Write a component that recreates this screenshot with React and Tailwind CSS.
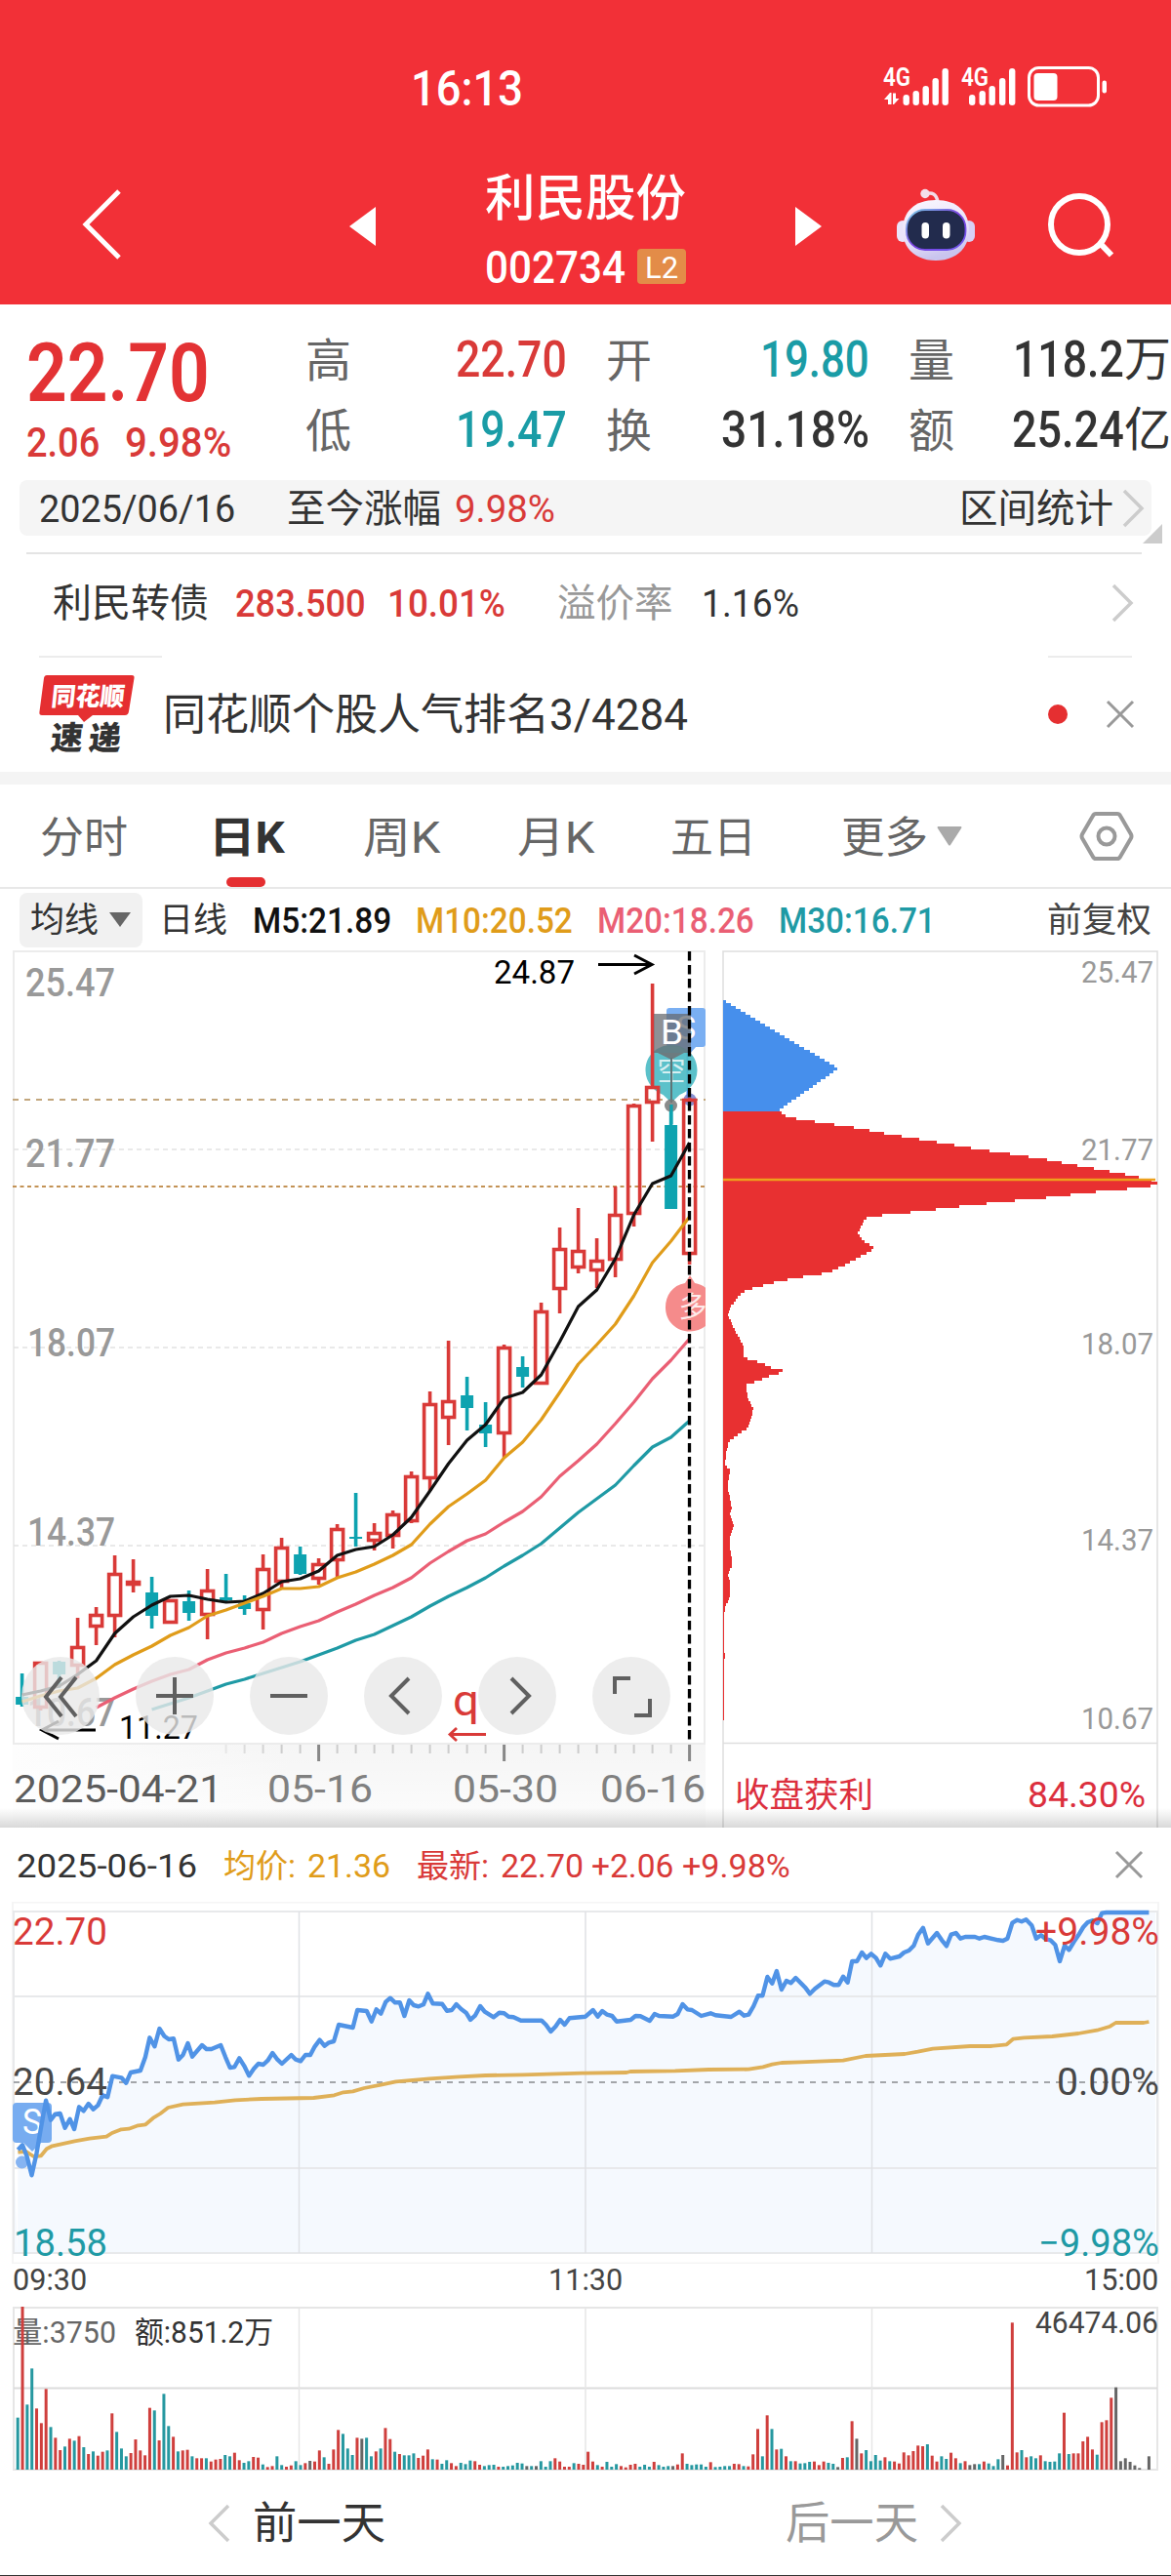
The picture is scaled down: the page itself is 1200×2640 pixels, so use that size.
import { useLayoutEffect, useRef } from "react";

const RED = "#d93a38";
const TEAL = "#0ea3b0";

// open/close body edges and wick ends, in chart pixels
const candles = [
  ["t", 1715, 1739, 1747, 1749], ["r", 1703, 1703, 1750, 1753], ["t", 1702, 1703, 1716, 1730],
  ["r", 1658, 1687, 1707, 1720], ["r", 1647, 1654, 1667, 1686], ["r", 1594, 1612, 1656, 1678],
  ["r", 1598, 1620, 1624, 1632], ["t", 1616, 1632, 1656, 1669], ["r", 1639, 1639, 1663, 1663],
  ["t", 1630, 1641, 1653, 1661], ["r", 1608, 1629, 1655, 1680], ["t", 1613, 1637, 1640, 1641],
  ["t", 1635, 1643, 1649, 1655], ["r", 1593, 1607, 1650, 1670], ["r", 1576, 1585, 1621, 1628],
  ["t", 1585, 1593, 1613, 1614], ["r", 1597, 1602, 1618, 1624], ["r", 1562, 1566, 1599, 1617],
  ["t", 1530, 1575, 1577, 1585], ["r", 1561, 1570, 1579, 1589], ["r", 1548, 1551, 1574, 1587],
  ["r", 1508, 1512, 1559, 1561], ["r", 1426, 1438, 1515, 1528], ["r", 1374, 1435, 1453, 1481],
  ["t", 1411, 1430, 1443, 1466], ["t", 1437, 1460, 1469, 1483], ["r", 1378, 1380, 1469, 1494],
  ["t", 1390, 1401, 1411, 1422], ["r", 1335, 1343, 1418, 1419], ["r", 1258, 1279, 1321, 1346],
  ["r", 1238, 1281, 1299, 1305], ["r", 1269, 1291, 1302, 1320], ["r", 1216, 1244, 1291, 1309],
  ["r", 1131, 1132, 1244, 1257], ["r", 1008, 1113, 1130, 1170], ["t", 1132, 1153, 1239, 1239],
  ["r", 1125, 1126, 1285, 1296],
];

const averages = [
  { color: "#111", from: 0, ys: [1737, 1733, 1728, 1716, 1702, 1674, 1657, 1645, 1636, 1635, 1639, 1642, 1641, 1633, 1621, 1618, 1610, 1594, 1588, 1585, 1573, 1555, 1528, 1500, 1476, 1460, 1433, 1427, 1409, 1375, 1339, 1322, 1290, 1245, 1213, 1205, 1171] },
  { color: "#e09c1a", from: 0, ys: [1744, 1738, 1733, 1730, 1720, 1706, 1696, 1687, 1676, 1668, 1656, 1650, 1643, 1636, 1628, 1628, 1626, 1617, 1611, 1603, 1594, 1583, 1562, 1544, 1531, 1517, 1494, 1478, 1455, 1427, 1398, 1378, 1357, 1328, 1294, 1272, 1247] },
  { color: "#ea5f74", from: 4, ys: [1750, 1740, 1731, 1723, 1716, 1711, 1701, 1694, 1689, 1683, 1674, 1667, 1661, 1652, 1644, 1635, 1627, 1617, 1602, 1590, 1579, 1572, 1560, 1549, 1534, 1513, 1497, 1480, 1459, 1437, 1413, 1394, 1372] },
  { color: "#1f9aa5", from: 7, ys: [1752, 1746, 1740, 1733, 1726, 1721, 1715, 1709, 1703, 1696, 1689, 1681, 1675, 1666, 1657, 1646, 1636, 1627, 1617, 1605, 1594, 1582, 1566, 1550, 1536, 1522, 1502, 1483, 1473, 1456] },
];

const candleX = (i) => 22.6 + i * 19;

// chip distribution contour: x,y pairs
const chips = [
  [741, 1025], [859, 1095], [798, 1138], [807, 1145], [832, 1149], [878, 1156], [908, 1162], [939, 1167], [969, 1172],
  [1003, 1178], [1032, 1182], [1070, 1188], [1101, 1194], [1129, 1199], [1156, 1204], [1174, 1208], [1186, 1211],
  [1186, 1214.5], [1160, 1218], [1134, 1220.5], [1107, 1223], [1083, 1226.5], [1035, 1231], [987, 1236], [963, 1239],
  [916, 1244.5], [891, 1246.5], [886, 1250], [879, 1264], [885, 1272], [895, 1278], [895, 1280], [885, 1286], [864, 1297.5],
  [848, 1304.5], [814, 1310], [791, 1315], [764, 1322.5], [757, 1328.5], [748, 1340], [746, 1347], [751, 1359],
  [761.5, 1379], [761.5, 1391], [781, 1397], [791, 1402], [802, 1404.5], [802, 1406.5], [790, 1409.5], [781, 1413.5],
  [764.5, 1419.5], [766, 1432], [772, 1444], [767, 1463], [760, 1467.5], [747, 1477.5], [744, 1488], [743, 1501],
  [748.5, 1507], [745.5, 1522], [749.6, 1545.5], [748, 1553], [752, 1564.5], [747.7, 1576], [748.5, 1588],
  [750.4, 1604], [746, 1614], [748.5, 1624], [748, 1635], [743, 1648], [741.2, 1661], [741.6, 1688], [742.7, 1695],
  [741.6, 1717], [742.2, 1729], [741.2, 1764],
];

function chipEdge(y) {
  for (let i = 1; i < chips.length; i++) {
    const [x0, y0] = chips[i - 1];
    const [x1, y1] = chips[i];
    if (y <= y1) return x0 + ((x1 - x0) * (y - y0)) / (y1 - y0);
  }
  return 741;
}

const pairs = (s) => s.trim().split(/\s+/).map((p) => p.split(",").map(Number));
const toPage = (list, ox) => list.map(([x, y]) => [ox + x / 2.6133, 1860 + y / 3]);

const price = [
  ...toPage(pairs("48,1030 60,1015 72,1050 85,1108 98,1040 110,960 123,878 136,938 148,920 161,918 174,962 187,935 199,966 212,898 224,910 237,888 250,905 262,893 275,862 288,868 301,803 325,808 338,824 350,792 376,786 389,745 401,685 414,712 427,657 440,680 452,690 465,688 478,752 490,738 503,702 515,743 541,708 553,720 566,720 591,708 604,745 616,777 628,775 641,748 654,772 667,802 680,780 692,765 705,768 717,755 730,732 743,752 755,765 780,738 792,752 805,757 818,738 831,738 843,712 856,692 869,710 881,700 894,696 907,645 945,654 957,600 982,603 995,635 1008,598 1020,611 1033,575 1045,563 1058,577 1071,577 1083,618 1096,570 1108,585 1121,589 1134,583 1146,550 1159,580 1184,581 1197,602 1210,600 1222,582 1235,597 1248,608 1260,630 1273,616 1286,588 1298,605 1322,622 1337,608 1350,610 1362,620 1375,622 1395,632 1450,632 1462,645 1475,666 1488,650 1500,630 1512,645 1525,625"), 0),
  ...toPage(pairs("0,620 20,600 33,620 45,603 58,614 71,618 83,635 121,630 134,618 147,619 172,633 185,612 197,618 235,620 247,612 260,582 273,598 285,600 310,618 335,610 348,616 390,621 412,605 425,617 437,614 450,588 462,556 474,556 487,498 500,518 512,480 525,537 538,510 550,517 563,501 588,530 601,550 614,535 640,512 652,515 665,523 678,523 690,497 702,515 714,450 727,450 740,423 752,440 765,427 778,440 790,463 803,427 816,442 841,435 853,423 866,417 879,402 891,368 904,347 917,395 941,363 954,385 967,403 979,368 992,363 1004,380 1017,375 1043,375 1055,380 1068,375 1105,385 1118,387 1130,380 1143,332 1156,323 1168,328 1180,322 1195,340 1207,380 1220,370 1233,382 1245,385 1258,400 1270,450 1283,402 1295,415 1308,390 1320,370 1333,345 1345,330 1358,325 1371,333 1383,302 1395,300 1509,300"), 600),
];

const avgPrice = [
  ...toPage(pairs("48,1037 70,1035 90,1050 110,1048 125,1027 140,1018 200,1003 240,995 285,989 300,978 325,967 345,965 370,955 390,952 410,932 430,918 450,900 490,890 575,884 630,877 700,873 840,870 895,862 920,853 945,850 975,840 1020,830 1060,820 1150,811 1230,805 1300,801 1400,799 1560,794"), 0),
  ...toPage(pairs("0,794 110,792 120,789 240,787 330,783 437,782 475,775 500,767 525,762 575,760 690,755 750,741 855,735 890,728 930,719 1030,711 1085,711 1128,706 1145,689 1175,685 1250,681 1320,672 1370,662 1405,650 1420,639 1495,639 1509,636"), 600),
];

// r = up, t = down, k = flat; the number is the top of the bar
const volume =
  "t533 r192 t493 t382 r505 r550 r445 t562 r595 r633 t622 r598 t604 r590 t624 r645 t637 r650 r638 t634 r520 t577 t628 t652 r642 r600 r634 r649 r503 t511 r603 t460 t559 r592 t637 r634 r632 t652 r658 r658 t658 r668 r662 r660 t648 t652 r641 r664 t672 t667 r654 r656 t677 r685 r682 t652 t679 r684 r680 t667 t679 r673 k666 r668 r634 t655 r675 r631 r571 t583 t628 t648 r595 k598 t595 t652 r637 t628 r565 r599 t638 r645 t649 t649 t643 r657 r650 r631 t661 r662 t675 t664 r673 r682 t672 t676 t665 r667 r678 t682 t679 t678 r684 t684 t682 t680 t672 t674 k682 t682 k682 t667 t684 t667 r658 r668 r684 r684 t673 r675 r678 r638 r668 t679 r684 t669 t684 t676 r682 r686 r678 r675 t684 t678 t684 r669 t679 t684 t682 k682 r677 r643 t675 t679 t677 t677 t684 r670 t685 t684 t682 t682 r675 r676 t682 r683 r646 r568 t652 r526 t568 r631 t629 r652 t667 r667 t674 t673 t669 r668 r679 r668 t672 t675 k685 r657 t655 r544 k598 r643 t633 t667 t648 t665 r655 t667 r668 r674 r640 r649 r636 r619 r621 t615 r650 r668 t652 t660 r641 r658 t673 r667 k679 k676 t676 r668 t674 t682 t661 k648 r680 r241 r640 t633 r655 t652 t658 r649 t667 t669 t668 t643 r518 t645 r643 r643 r606 r592 r631 t647 r547 r541 r472 k440 k667 k658 k669 k680 k688 k693 k652".split(" ");

const volColor = { r: "#cf3f3d", t: "#2698a0", k: "#666" };

const points = (list) => list.map(([x, y]) => `${x.toFixed(1)},${y.toFixed(1)}`).join(" ");

// Text squeezed or stretched to the width of its box
function Fit({ className, children }) {
  const outer = useRef(null);
  const inner = useRef(null);
  useLayoutEffect(() => {
    const ratio = outer.current.clientWidth / inner.current.offsetWidth;
    inner.current.style.transform = `translateY(1px) scaleX(${ratio})`;
  }, [children]);
  return (
    <span ref={outer} className={`block shrink-0 leading-none whitespace-nowrap ${className}`}>
      <span ref={inner} className="inline-block origin-left align-top">
        {children}
      </span>
    </span>
  );
}

function Label({ x, y, w, size = 40, fill = "#999", weight = 400, children }) {
  return (
    <text x={x} y={y} fontSize={size} fill={fill} fontWeight={weight} textLength={w} lengthAdjust="spacingAndGlyphs">
      {children}
    </text>
  );
}

function Chevron({ left, className }) {
  return (
    <svg viewBox="0 0 24 40" className={`w-6 h-10 shrink-0 ${className}`} fill="none" stroke="currentColor" strokeWidth="3.5">
      <path d={left ? "M21 2 3 20l18 18" : "M3 2l18 18L3 38"} />
    </svg>
  );
}

function Close({ className }) {
  return (
    <svg viewBox="0 0 30 30" className={`w-[30px] h-[30px] shrink-0 ${className}`} stroke="#999" strokeWidth="3">
      <path d="M2 2l26 26M28 2 2 28" />
    </svg>
  );
}

function Signal() {
  const bars = [
    [23.5, 11], [33.5, 15], [43.5, 20], [53.5, 28], [63.5, 38],
    [91, 11], [101.5, 15], [111.5, 20], [122, 28], [132, 38],
  ];
  return (
    <svg viewBox="0 0 150 50" className="w-[150px] h-[50px] ml-[366px] shrink-0" fill="#fff">
      <Label x={3} y={23} w={28} size={26} fill="#fff" weight={600}>4G</Label>
      <Label x={83} y={23} w={28} size={26} fill="#fff" weight={600}>4G</Label>
      <path d="M4 37l6-7h1.500V42H8v-5zM13 30.500h3V36h3.500l-5.500 6h-1z" />
      {bars.map(([x, h]) => (
        <rect key={x} x={x} y={43 - h} width="6.400" height={h} rx="3.200" />
      ))}
    </svg>
  );
}

function Battery() {
  return (
    <svg viewBox="0 0 84 42" className="w-[84px] h-[42px] ml-[1px] -mt-[3px] shrink-0">
      <rect x="1.500" y="1.500" width="71" height="38.500" rx="10" fill="none" stroke="#fff" strokeWidth="3" />
      <rect x="6.500" y="7" width="24" height="28" rx="4" fill="#fff" />
      <rect x="76.500" y="14.500" width="4.500" height="13" rx="2.200" fill="#fff" />
    </svg>
  );
}

function Robot() {
  return (
    <svg viewBox="0 0 80 76" className="w-20 h-[76px] ml-[77px] shrink-0">
      <defs>
        <linearGradient id="shell" x1="0" y1="0" x2="0.300" y2="1">
          <stop offset="0" stopColor="#fbf8ff" />
          <stop offset="0.700" stopColor="#e6def8" />
          <stop offset="1" stopColor="#c9c4ee" />
        </linearGradient>
        <linearGradient id="rim" x1="0" y1="0" x2="1" y2="1">
          <stop offset="0" stopColor="#7fd8ea" />
          <stop offset="0.500" stopColor="#7a3fe0" />
          <stop offset="1" stopColor="#6f5cf0" />
        </linearGradient>
      </defs>
      <path d="M29 7q11-4 13 8" fill="none" stroke="#f3dbe8" strokeWidth="3.500" />
      <circle cx="29" cy="6.500" r="4.700" fill="#f4dfea" />
      <rect x="0" y="34" width="12" height="22" rx="6" fill="#eae4fa" />
      <rect x="68" y="34" width="12" height="22" rx="6" fill="#d8d0f5" />
      <path d="M40 13c22 0 34 12 34 31S60 75 40 75 6 63 6 44s12-31 34-31z" fill="url(#shell)" />
      <rect x="10" y="23" width="60.500" height="41" rx="19" fill="#222b4d" stroke="url(#rim)" strokeWidth="1.800" />
      <rect x="25.500" y="36" width="7.500" height="16.500" rx="3.700" fill="#fff" />
      <rect x="47" y="36" width="7.500" height="16.500" rx="3.700" fill="#fff" />
    </svg>
  );
}

function Header() {
  return (
    <header className="h-[312px] bg-[#f23037] text-white">
      <div className="flex h-[140px] items-center pt-[40px]">
        <Fit className="w-[115px] ml-[421px] text-[50px] font-medium">16:13</Fit>
        <Signal />
        <Battery />
      </div>
      <div className="flex h-[172px] items-center pt-[8px]">
        <svg viewBox="0 0 42 72" className="w-[42px] h-[72px] ml-[83px] shrink-0" fill="none" stroke="#fff" strokeWidth="5">
          <path d="M39 2 5 36l34 34" />
        </svg>
        <svg viewBox="0 0 27 40" className="w-[27px] h-10 ml-[233px] mt-1 shrink-0">
          <path d="M27 0v40L0 20z" fill="#fff" />
        </svg>
        <div className="ml-[112px] w-[206px] shrink-0 pt-[8px]">
          <Fit className="w-[206px] text-[51px] font-medium">利民股份</Fit>
          <div className="mt-[27px] flex h-9 items-center">
            <Fit className="w-[144px] text-[46px] font-medium">002734</Fit>
            <div className="ml-[12px] flex h-9 w-[51px] items-center justify-center rounded bg-[#e38c48]">
              <Fit className="w-[34px] text-[31px]">L2</Fit>
            </div>
          </div>
        </div>
        <svg viewBox="0 0 27 40" className="w-[27px] h-10 ml-[112px] mt-1 shrink-0">
          <path d="M0 0v40l27-20z" fill="#fff" />
        </svg>
        <Robot />
        <svg viewBox="0 0 68 68" className="w-[68px] h-[68px] ml-[75px] mt-1 shrink-0" fill="none" stroke="#fff" strokeWidth="6">
          <circle cx="32" cy="32" r="29" />
          <path d="M53 51l12 12.500" />
        </svg>
      </div>
    </header>
  );
}

function Quote() {
  return (
    <section className="flex h-[180px] text-[#333]">
      <div className="w-[313px] shrink-0 pl-[27px] pt-[28px] text-[#e33234]">
        <Fit className="w-[188px] text-[84px] font-semibold">22.70</Fit>
        <div className="mt-[8px] flex text-[#d93a38] text-[42px] font-medium">
          <Fit className="w-[75px]">2.06</Fit>
          <Fit className="w-[109px] ml-[26px]">9.98%</Fit>
        </div>
      </div>
      <div className="flex shrink-0 flex-col gap-[20px] pt-[30px] text-[52px] font-medium">
        <div className="flex h-[52px] items-center">
          <Fit className="w-[47px] text-[47px] font-normal text-[#666]">高</Fit>
          <Fit className="w-[114px] ml-[107px] text-[#d93a38]">22.70</Fit>
          <Fit className="w-[47px] ml-[40px] text-[47px] font-normal text-[#666]">开</Fit>
          <Fit className="w-[112px] ml-[111px] text-[#1a9ca6]">19.80</Fit>
          <Fit className="w-[47px] ml-[40px] text-[47px] font-normal text-[#666]">量</Fit>
          <div className="ml-[60px] flex items-center">
            <Fit className="w-[114px]">118.2</Fit>
            <Fit className="w-[48px] text-[48px] font-normal">万</Fit>
          </div>
        </div>
        <div className="flex h-[52px] items-center">
          <Fit className="w-[47px] text-[47px] font-normal text-[#666]">低</Fit>
          <Fit className="w-[114px] ml-[107px] text-[#1a9ca6]">19.47</Fit>
          <Fit className="w-[47px] ml-[40px] text-[47px] font-normal text-[#666]">换</Fit>
          <Fit className="w-[152px] ml-[71px]">31.18%</Fit>
          <Fit className="w-[47px] ml-[40px] text-[47px] font-normal text-[#666]">额</Fit>
          <div className="ml-[59px] flex items-center">
            <Fit className="w-[115px]">25.24</Fit>
            <Fit className="w-[48px] text-[48px] font-normal">亿</Fit>
          </div>
        </div>
      </div>
    </section>
  );
}

function Interval() {
  return (
    <div className="relative h-[74px] px-5">
      <div className="flex h-[57px] items-center rounded-lg bg-[#f5f5f5] text-[39.500px] text-[#333]">
        <Fit className="w-[201px] ml-[20px]">2025/06/16</Fit>
        <Fit className="w-[158px] ml-[53px]">至今涨幅</Fit>
        <Fit className="w-[103px] ml-[14px] text-[#d93a38]">9.98%</Fit>
        <Fit className="w-[158px] ml-[414px]">区间统计</Fit>
        <Chevron className="ml-[8px] text-[#ccc]" />
      </div>
      <svg viewBox="0 0 20 20" className="absolute left-[1171px] top-[45px] w-5 h-5">
        <path d="M20 0v20H0z" fill="#ccc" />
      </svg>
      <div className="ml-[7px] mt-[17px] h-0.5 w-[1143px] bg-[#e4e4e4]" />
    </div>
  );
}

function Bond() {
  return (
    <div className="flex h-[106px] items-center pb-[3px] text-[39.500px] text-[#333]">
      <Fit className="w-[160px] ml-[54px]">利民转债</Fit>
      <Fit className="w-[134px] ml-[27px] font-medium text-[#d93a38]">283.500</Fit>
      <Fit className="w-[121px] ml-[22px] font-medium text-[#d93a38]">10.01%</Fit>
      <Fit className="w-[119px] ml-[53px] text-[#999]">溢价率</Fit>
      <Fit className="w-[100px] ml-[29px]">1.16%</Fit>
      <Chevron className="ml-[319px] text-[#ccc]" />
    </div>
  );
}

function News() {
  return (
    <div className="h-[119px]">
      <div className="flex justify-between pl-10 pr-10">
        <div className="h-0.5 w-[126px] bg-[#ececec]" />
        <div className="h-0.5 w-[86px] bg-[#ececec]" />
      </div>
      <div className="flex h-[117px] items-center pb-[1px]">
        <svg viewBox="0 0 98 80" className="w-[98px] h-20 ml-[40px] shrink-0 overflow-visible">
          <path d="M8 0h87q3 0 2.500 3L92 37q-.500 4-4 4H55l-9 7-6-7H3q-3 0-2.600-3L5 3q.500-3 3-3z" fill="#e52f31" />
          <g transform="skewX(-6)">
            <Label x={15} y={31} w={75} size={26} fill="#fff" weight={900}>同花顺</Label>
            <Label x={19} y={76} w={33} size={33} fill="#333" weight={900}>速</Label>
            <Label x={58} y={76} w={33} size={33} fill="#333" weight={900}>递</Label>
          </g>
        </svg>
        <Fit className="w-[538px] ml-[29px] text-[44.500px] text-[#333]">同花顺个股人气排名3/4284</Fit>
        <div className="ml-[369px] h-5 w-5 rounded-full bg-[#e52f31]" />
        <Close className="ml-[39px]" />
      </div>
    </div>
  );
}

function Tabs() {
  return (
    <nav className="flex h-[107px] items-start border-b-2 border-[#e8e8e8] pt-[32px] text-[44.500px] text-[#666]">
      <Fit className="w-[90px] ml-[41px]">分时</Fit>
      <div className="relative ml-[83px] h-[73px]">
        <Fit className="w-[78px] font-bold text-[#333]">日K</Fit>
        <div className="absolute bottom-0 left-[18px] h-[10px] w-[40px] rounded-[5px] bg-[#e52f31]" />
      </div>
      <Fit className="w-[79px] ml-[80px]">周K</Fit>
      <Fit className="w-[79px] ml-[79px]">月K</Fit>
      <Fit className="w-[88px] ml-[78px]">五日</Fit>
      <Fit className="w-[89px] ml-[87px]">更多</Fit>
      <svg viewBox="0 0 26 20" className="w-[26px] h-5 ml-[9px] mt-[11px] shrink-0">
        <path d="M1 0h24q1 1 0 2L14 19q-1 1-2 0L1 2q-1-1 0-2z" fill="#aaa" />
      </svg>
      <svg viewBox="0 0 56 54" className="w-[56px] h-[54px] ml-[120px] -mt-[6px] shrink-0" fill="none" stroke="#999" strokeWidth="4">
        <path d="M17 4h22q2 0 3 2l11 19q1 2 0 4L42 48q-1 2-3 2H17q-2 0-3-2L3 29q-1-2 0-4L14 6q1-2 3-2z" />
        <circle cx="28" cy="27" r="8.500" />
      </svg>
    </nav>
  );
}

function AverageBar() {
  return (
    <div className="flex h-[63px] items-center text-[36px] font-medium">
      <div className="ml-5 flex h-[56px] w-[126px] items-center rounded-lg bg-[#f1f1f1]">
        <Fit className="w-[70px] ml-[11px] text-[35px] font-normal text-[#333]">均线</Fit>
        <svg viewBox="0 0 22 15" className="w-[22px] h-[15px] ml-[11px] shrink-0">
          <path d="M0 0h22L11 15z" fill="#666" />
        </svg>
      </div>
      <Fit className="w-[70px] ml-[17px] text-[35px] font-normal text-[#333]">日线</Fit>
      <Fit className="w-[142px] ml-[26px] text-[#111]">M5:21.89</Fit>
      <Fit className="w-[161px] ml-[25px] text-[#e09c1a]">M10:20.52</Fit>
      <Fit className="w-[161px] ml-[25px] text-[#ea5f74]">M20:18.26</Fit>
      <Fit className="w-[161px] ml-[25px] text-[#1f9aa5]">M30:16.71</Fit>
      <Fit className="w-[107px] ml-[114px] text-[35px] font-normal text-[#444]">前复权</Fit>
    </div>
  );
}

const controls = [
  "M41 21 25 41l16 20M56 21 40 41l16 20",
  "M40 21v38M21 40h38",
  "M21 40h38",
  "M46 22 28 40l18 18",
  "M34 22l18 18-18 18",
  "M23 38V22h16M59 43v17H43",
];

function KLine() {
  const ticks = candles.map((_, i) => i).filter((i) => i > 10);
  return (
    <div className="relative h-[899px] w-[740px] shrink-0">
      <svg viewBox="0 974 740 899" className="block h-[899px] w-[740px]">
        <defs>
          <linearGradient id="axis" x1="0" y1="0" x2="0.400" y2="0">
            <stop offset="0" stopColor="#fdfdfd" />
            <stop offset="1" stopColor="#f5f5f5" />
          </linearGradient>
          <linearGradient id="axisFade" x1="0" y1="0" x2="0" y2="1">
            <stop offset="0" stopColor="#fff" stopOpacity="0" />
            <stop offset="1" stopColor="#fff" stopOpacity="0.800" />
          </linearGradient>
          <clipPath id="plot"><rect x="13" y="974" width="710" height="820" /></clipPath>
        </defs>
        <rect x="13" y="1788" width="710" height="85" fill="url(#axis)" />
        <rect x="13" y="1788" width="710" height="85" fill="url(#axisFade)" />
        <rect x="14" y="975" width="708" height="812" fill="none" stroke="#ececec" strokeWidth="2" />
        <g fill="none">
          <path d="M14 1178h708M14 1381h708M14 1584h708" stroke="#e2e2e2" strokeWidth="1.500" strokeDasharray="5 4" />
          <path d="M13 1127h710" stroke="#c2a67c" strokeWidth="2" strokeDasharray="6 6" />
          <path d="M13 1216h710" stroke="#c39255" strokeWidth="2" strokeDasharray="4 3.500" />
        </g>
        <g>
          <Label x={26} y={1021} w={92} weight={500}>25.47</Label>
          <Label x={26} y={1196} w={92} weight={500}>21.77</Label>
          <Label x={28} y={1390} w={90} weight={500}>18.07</Label>
          <Label x={28} y={1584} w={90} weight={500}>14.37</Label>
          <Label x={28} y={1769} w={90} weight={500}>10.67</Label>
        </g>
        <g clipPath="url(#plot)">
          <rect x="683" y="1033" width="40" height="40" rx="3" fill="#7aaff2" />
          <path d="M696 1072h18l-9 10z" fill="#7aaff2" />
          <text x="703" y="1065" fontSize="34" textAnchor="middle" fill="#fff">S</text>
          <path d="M704.500 1080v45" stroke="#4c8ff0" strokeWidth="2" />
          <circle cx="707" cy="1127" r="6.500" fill="#6a74c8" fillOpacity="0.800" />
          <path d="M688 1071c15 0 26.500 11 26.500 26 0 13-10 22-18 25l-8.500 8-8.500-8c-8-3-18-12-18-25 0-15 11.500-26 26.500-26z" fill="#4dbcc6" fillOpacity="0.920" />
          <text x="688" y="1108" fontSize="29" textAnchor="middle" fill="#fff" fillOpacity="0.750">空</text>
        </g>
        {candles.map(([dir, high, top, bottom, low], i) => {
          const x = candleX(i);
          const color = dir === "r" ? RED : TEAL;
          return (
            <g key={i} stroke={color} strokeWidth="3.600">
              <path d={`M${x} ${high}V${top}M${x} ${bottom}V${low}`} />
              {dir === "r" ? (
                <rect x={x - 6} y={top + 1.5} width="12" height={Math.max(bottom - top - 2, 1)} fill="none" />
              ) : (
                <rect x={x - 6.5} y={top} width="13" height={bottom - top} fill={color} stroke="none" />
              )}
            </g>
          );
        })}
        {averages.map(({ color, from, ys }) => (
          <polyline
            key={color}
            points={points(ys.map((y, i) => [candleX(i + from), y]))}
            fill="none"
            stroke={color}
            strokeWidth="3.200"
            strokeLinejoin="round"
          />
        ))}
        <g>
          <path d="M670 1039h38v40h-38z" fill="#666a70" fillOpacity="0.740" />
          <path d="M674 1079h27l-13 7z" fill="#6c7c80" />
          <path d="M688 1084v46" stroke="#5f7577" strokeWidth="2" />
          <circle cx="687.500" cy="1133" r="6.500" fill="#777" fillOpacity="0.850" />
          <path d="M688 1132v20" stroke={TEAL} strokeWidth="3" />
          <Label x={677} y={1070} w={23} size={35} fill="#fff">B</Label>
        </g>
        <g clipPath="url(#plot)">
          <path d="M707 1307l5 8c13 2 20 13 20 25 0 14-11 24.500-25 24.500s-25-10.500-25-24.500c0-12 7-23 20-25z" fill="#f58b8b" />
          <text x="710" y="1350" fontSize="29" textAnchor="middle" fill="#fff" fillOpacity="0.850">多</text>
        </g>
        <path d="M706.500 975v812" stroke="#000" strokeWidth="3.300" strokeDasharray="9.500 4.500" />
        <Label x={506} y={1008} w={83} size={34} fill="#000">24.87</Label>
        <path d="M613 988.500h55M650 979l18 9.500-18 9.500" fill="none" stroke="#000" strokeWidth="3" />
        <Label x={122} y={1782} w={81} size={34} fill="#000">11.27</Label>
        <path d="M98 1773H43M60 1764l-17 9 17 9" fill="none" stroke="#000" strokeWidth="3" />
        <Label x={464} y={1758} w={27} size={44} fill={RED}>q</Label>
        <path d="M498 1777.500h-37M468 1771l-7 6.500 7 6.500" fill="none" stroke={RED} strokeWidth="2.800" />
        {ticks.map((i) => {
          const major = i % 10 === 6;
          return (
            <path
              key={i}
              d={`M${candleX(i)} 1788v${major ? 17 : 9}`}
              stroke={major ? "#888" : "#ccc"}
              strokeWidth={major ? 3 : 2}
              strokeOpacity={Math.min(1, (i - 9) / 5)}
            />
          );
        })}
        <Label x={14} y={1847} w={214} size={39} fill="#5c5c5c">2025-04-21</Label>
        <Label x={274} y={1847} w={108} size={39} fill="#808080">05-16</Label>
        <Label x={464} y={1847} w={108} size={39} fill="#808080">05-30</Label>
        <Label x={615} y={1847} w={108} size={39} fill="#808080">06-16</Label>
      </svg>
      <div className="absolute left-[22px] top-[724px] flex gap-[37px]">
        {controls.map((d) => (
          <button key={d} className="h-20 w-20 rounded-full bg-[#e9e9e9]/80">
            <svg viewBox="0 0 80 80" className="h-20 w-20" fill="none" stroke="#606060" strokeWidth="4">
              <path d={d} />
            </svg>
          </button>
        ))}
      </div>
    </div>
  );
}

function Chips() {
  const step = 3;
  const rows = Array.from({ length: 246 }, (_, i) => 1025 + i * step);
  return (
    <svg viewBox="740 974 460 899" className="block h-[899px] w-[460px] shrink-0">
      <path d="M741 1873V975h445v898M741 1786.500h445" fill="none" stroke="#dedede" strokeWidth="1.500" />
      <g>
        <Label x={1108} y={1007} w={74} size={31}>25.47</Label>
        <Label x={1108} y={1189} w={74} size={31}>21.77</Label>
        <Label x={1108} y={1388} w={74} size={31}>18.07</Label>
        <Label x={1108} y={1589} w={74} size={31}>14.37</Label>
        <Label x={1108} y={1772} w={74} size={31}>10.67</Label>
      </g>
      <g shapeRendering="crispEdges">
        {rows.map((y) => (
          <rect
            key={y}
            x="741"
            y={y}
            width={Math.max(0.5, chipEdge(y + step / 2) - 741)}
            height={step}
            fill={y < 1137 ? "#468fec" : "#e83031"}
          />
        ))}
      </g>
      <path d="M741 1209h443" stroke="#eda01c" strokeWidth="2.500" />
      <Label x={753} y={1852} w={142} size={35} fill="#dc2f3e">收盘获利</Label>
      <Label x={1053} y={1852} w={121} size={36} fill="#dc2f3e">84.30%</Label>
    </svg>
  );
}

function DayHeader() {
  return (
    <div className="flex h-[76px] items-center pt-[2px] text-[33.500px] text-[#d93a38]">
      <Fit className="w-[185px] ml-[17px] text-[#333]">2025-06-16</Fit>
      <Fit className="w-[74px] ml-[27px] text-[#e09c1a]">均价:</Fit>
      <Fit className="w-[85px] ml-[12px] text-[#e09c1a]">21.36</Fit>
      <Fit className="w-[74px] ml-[27px]">最新:</Fit>
      <Fit className="w-[85px] ml-[12px]">22.70</Fit>
      <Fit className="w-[84px] ml-[8px]">+2.06</Fit>
      <Fit className="w-[111px] ml-[9px]">+9.98%</Fit>
      <Close className="ml-[332px] -mt-[2px]" />
    </div>
  );
}

function DayChart() {
  return (
    <svg viewBox="0 1949 1200 371" className="block h-[371px] w-[1200px]">
      <rect x="13" y="1949.500" width="1174" height="370" fill="none" stroke="#f5f5f5" strokeWidth="2" />
      <polygon points={`18,2309 ${points(price)} 1184,1960 1184,2309 14,2309 14,2203`} fill="#f5f9fe" />
      <g fill="none" stroke="#e8e9eb" strokeWidth="2">
        <path d="M14 1959h1172v350H14zM14 2046h1172M14 2222h1172" />
        <path d="M306.500 1959v350M600 1959v350M893.500 1959v350" strokeWidth="1.500" stroke="#dfe1e5" />
      </g>
      <path d="M14 2134h1172" stroke="#a3a6aa" strokeWidth="2" strokeDasharray="6 6" />
      <rect x="13" y="2155" width="40" height="41" rx="4" fill="#77acf0" />
      <path d="M24 2196h18l-9 9z" fill="#77acf0" />
      <Label x={23} y={2187} w={20} size={36} fill="#fff">S</Label>
      <polyline points={points(avgPrice)} fill="none" stroke="#dfb058" strokeWidth="3.800" strokeLinejoin="round" />
      <circle cx="22.500" cy="2216" r="6.500" fill="#86b4f2" />
      <polyline points={points(price)} fill="none" stroke="#5093e6" strokeWidth="4.400" strokeLinejoin="round" />
      <Label x={13} y={1993} w={97} size={39} fill={RED}>22.70</Label>
      <Label x={13} y={2147} w={97} size={39} fill="#484848">20.64</Label>
      <Label x={14} y={2312} w={96} size={39} fill="#1f9aa5">18.58</Label>
      <Label x={1061} y={1993} w={127} size={39} fill={RED}>+9.98%</Label>
      <Label x={1083} y={2147} w={105} size={39} fill="#484848">0.00%</Label>
      <Label x={1064} y={2312} w={124} size={39} fill="#1f9aa5">−9.98%</Label>
    </svg>
  );
}

function VolumeChart() {
  return (
    <svg viewBox="0 2362 1200 170" className="block h-[170px] w-[1200px]">
      <g fill="none" stroke="#e6e6e6" strokeWidth="2">
        <path d="M14 2365h1172v166H14z" />
        <path d="M14 2447.500h1172" stroke="#dcdcdc" />
        <path d="M306.500 2365v166M600 2365v166M893.500 2365v166" strokeWidth="1.500" />
      </g>
      <Label x={13} y={2401} w={106} size={31} fill="#666">量:3750</Label>
      <Label x={138} y={2401} w={142} size={31} fill="#333">额:851.2万</Label>
      <Label x={1061} y={2391} w={126} size={31} fill="#444">46474.06</Label>
      {volume.map((v, i) => {
        const h = (693 - Number(v.slice(1))) / 3;
        return <rect key={i} x={16.7 + i * 4.83} y={2531 - h} width="3" height={h} fill={volColor[v[0]]} />;
      })}
    </svg>
  );
}

export default function App() {
  return (
    <div className="h-[2640px] w-[1200px] overflow-hidden bg-white font-['Roboto','Noto_Sans_CJK_SC',sans-serif]">
      <Header />
      <Quote />
      <Interval />
      <Bond />
      <News />
      <div className="h-[13px] bg-[#f4f4f4]" />
      <Tabs />
      <AverageBar />
      <div className="relative flex h-[899px]">
        <KLine />
        <Chips />
        <div className="absolute inset-x-0 bottom-0 h-[20px] bg-linear-to-b from-black/0 to-black/15" />
      </div>
      <DayHeader />
      <DayChart />
      <div className="flex h-[42px] items-start justify-between pl-[13px] pr-[13px] text-[31px] text-[#444]">
        <Fit className="w-[76px]">09:30</Fit>
        <Fit className="w-[76px]">11:30</Fit>
        <Fit className="w-[76px]">15:00</Fit>
      </div>
      <VolumeChart />
      <div className="flex h-[108px] items-center border-b border-[#333] text-[45px]">
        <Chevron left className="ml-[213px] text-[#ccc]" />
        <Fit className="w-[136px] ml-[22px] text-[#333]">前一天</Fit>
        <Fit className="w-[136px] ml-[410px] text-[#999]">后一天</Fit>
        <Chevron className="ml-[21px] text-[#ccc]" />
      </div>
    </div>
  );
}
